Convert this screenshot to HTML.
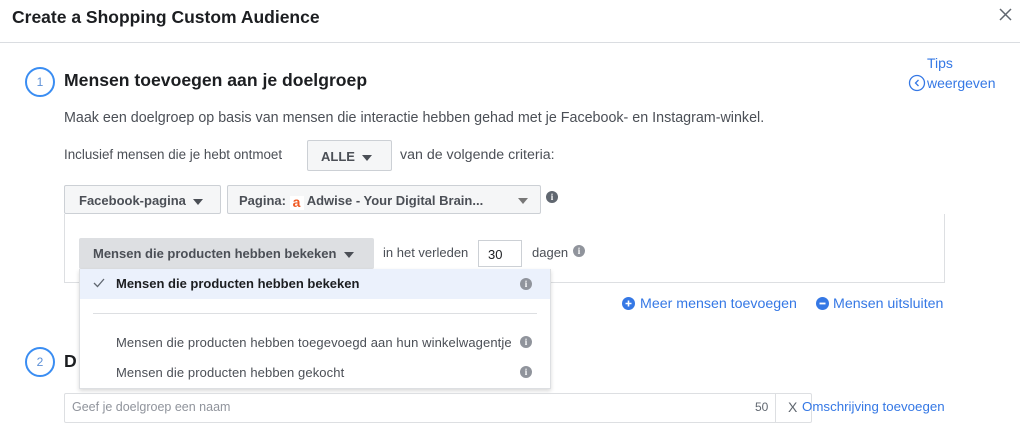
<!DOCTYPE html>
<html><head><meta charset="utf-8"><style>
*{box-sizing:border-box;margin:0;padding:0}
body{width:1020px;height:443px;background:#fff;font-family:"Liberation Sans",Arial,sans-serif;position:relative;overflow:hidden;color:#1c1e21}
.a{position:absolute;white-space:nowrap}
.t13{font-size:13px;color:#4b4f56}
.blue{color:#3578e5}
.circ{position:absolute;width:30px;height:30px;border:2px solid #3a8df2;border-radius:50%;text-align:center;line-height:26px;font-size:12px;color:#5b8fd6}
.btn{position:absolute;background:#f5f6f7;border:1px solid #ccd0d5;border-radius:2px;font-size:13px;font-weight:bold;color:#4b4f56}
.caret{display:inline-block;width:0;height:0;border-left:5px solid transparent;border-right:5px solid transparent;border-top:6px solid #4b4f56;vertical-align:middle}
.info{position:absolute;width:12px;height:12px;border-radius:50%;background:#90949c;color:#fff;font-size:9px;font-weight:bold;text-align:center;line-height:12px;font-family:"Liberation Serif",serif}
</style></head><body>
<div class="a" style="left:12px;top:7px;font-size:17.5px;font-weight:bold;color:#1c1e21">Create a Shopping Custom Audience</div>
<svg class="a" style="left:999px;top:8px" width="13" height="13"><path d="M1 1L12 12M12 1L1 12" stroke="#606770" stroke-width="1.5"/></svg>
<div class="a" style="left:0;top:42px;width:1020px;height:1px;background:#dadde1"></div>

<div class="circ" style="left:25px;top:67px">1</div>
<div class="a" style="left:64px;top:70px;font-size:17.6px;font-weight:bold;color:#1c1e21">Mensen toevoegen aan je doelgroep</div>
<div class="a blue" style="left:927px;top:55px;font-size:14px">Tips</div>
<svg class="a" style="left:908px;top:74px" width="18" height="18"><circle cx="9" cy="9" r="7.5" fill="none" stroke="#3578e5" stroke-width="1.3"/><path d="M10.5 6L7.5 9L10.5 12" fill="none" stroke="#3578e5" stroke-width="1.3"/></svg>
<div class="a blue" style="left:927px;top:75px;font-size:14px">weergeven</div>

<div class="a t13" style="left:64px;top:110px;font-size:14.3px">Maak een doelgroep op basis van mensen die interactie hebben gehad met je Facebook- en Instagram-winkel.</div>
<div class="a t13" style="left:64px;top:147px;font-size:13.4px">Inclusief mensen die je hebt ontmoet</div>
<div class="btn" style="left:307px;top:140px;width:85px;height:31px;padding:8px 0 0 13px">ALLE&nbsp; <span class="caret"></span></div>
<div class="a t13" style="left:400px;top:147px;font-size:14.2px">van de volgende criteria:</div>

<div class="btn" style="left:64px;top:185px;width:157px;height:29px;padding:7px 0 0 14px;font-weight:bold">Facebook-pagina&nbsp; <span class="caret"></span></div>
<div class="btn" style="left:227px;top:185px;width:314px;height:29px;padding:7px 0 0 11px">Pagina: <span style="display:inline-block;width:14px;height:14px;background:#fff;color:#f05a24;font-size:14px;line-height:12px;text-align:center;vertical-align:-2px">a</span> Adwise - Your Digital Brain...<span class="caret" style="position:absolute;left:290px;top:12px;border-top-color:#777"></span></div>
<div class="info" style="left:546px;top:191px;background:#606770">i</div>

<div class="a" style="left:64px;top:214px;width:881px;height:69px;border:1px solid #dddfe2;border-top:none"></div>
<div class="a" style="left:79px;top:238px;width:295px;height:31px;background:#dddfe2;border-radius:2px;font-size:13px;font-weight:bold;color:#4b4f56;padding:8px 0 0 14px">Mensen die producten hebben bekeken&nbsp; <span class="caret"></span></div>
<div class="a t13" style="left:383px;top:245px">in het verleden</div>
<div class="a" style="left:478px;top:240px;width:44px;height:27px;border:1px solid #ccd0d5;font-size:13px;padding:6px 0 0 9px;color:#1c1e21">30</div>
<div class="a t13" style="left:532px;top:245px">dagen</div>
<div class="info" style="left:573px;top:245px">i</div>

<div class="a" style="left:79px;top:269px;width:472px;height:120px;background:#fff;border:1px solid #dddfe2;box-shadow:0 2px 4px rgba(0,0,0,.15)"></div>
<div class="a" style="left:80px;top:269px;width:470px;height:30px;background:#ebf1fc"></div>
<svg class="a" style="left:93px;top:278px" width="12" height="10"><path d="M1 5L4.5 8.5L11 1" fill="none" stroke="#606770" stroke-width="1.3"/></svg>
<div class="a" style="left:116px;top:276px;font-size:13px;font-weight:bold;color:#1c1e21">Mensen die producten hebben bekeken</div>
<div class="info" style="left:520px;top:278px">i</div>
<div class="a" style="left:93px;top:313px;width:444px;height:1px;background:#dddfe2"></div>
<div class="a t13" style="left:116px;top:335px;letter-spacing:0.1px">Mensen die producten hebben toegevoegd aan hun winkelwagentje</div>
<div class="info" style="left:520px;top:336px">i</div>
<div class="a t13" style="left:116px;top:365px;letter-spacing:0.1px">Mensen die producten hebben gekocht</div>
<div class="info" style="left:520px;top:366px">i</div>

<svg class="a" style="left:622px;top:297px" width="13" height="13"><circle cx="6.5" cy="6.5" r="6.5" fill="#3578e5"/><path d="M6.5 3.5v6M3.5 6.5h6" stroke="#fff" stroke-width="1.6"/></svg>
<div class="a blue" style="left:640px;top:296px;font-size:14.2px">Meer mensen toevoegen</div>
<svg class="a" style="left:816px;top:297px" width="13" height="13"><circle cx="6.5" cy="6.5" r="6.5" fill="#3578e5"/><path d="M3.5 6.5h6" stroke="#fff" stroke-width="1.8"/></svg>
<div class="a blue" style="left:833px;top:296px;font-size:14.2px">Mensen uitsluiten</div>

<div class="circ" style="left:25px;top:347px">2</div>
<div class="a" style="left:64px;top:351px;font-size:17.6px;font-weight:bold">D</div>

<div class="a" style="left:64px;top:393px;width:748px;height:30px;border:1px solid #dddfe2;border-radius:2px"></div>
<div class="a" style="left:72px;top:400px;font-size:12.5px;color:#90949c">Geef je doelgroep een naam</div>
<div class="a" style="left:755px;top:400px;font-size:12px;color:#606770">50</div>
<div class="a" style="left:775px;top:393px;width:1px;height:30px;background:#dddfe2"></div>
<div class="a" style="left:788px;top:399px;font-size:14px;color:#606770">X</div>
<div class="a blue" style="left:802px;top:399px;font-size:13.3px">Omschrijving toevoegen</div>
</body></html>
